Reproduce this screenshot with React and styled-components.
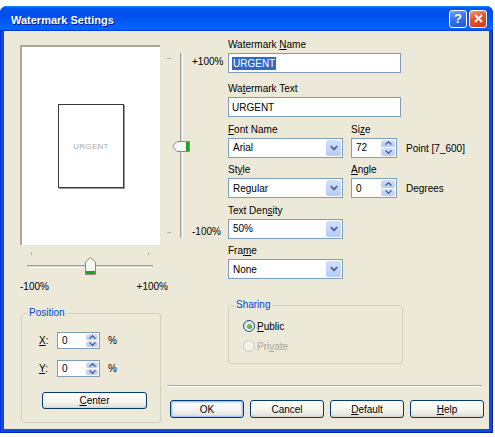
import React from "react";
import styled, { createGlobalStyle, css } from "styled-components";

const GlobalStyle = createGlobalStyle`
  html, body {
    margin: 0;
    background: #fff;
  }
  body {
    font-family: "Liberation Sans", Arial, sans-serif;
    font-size: 10px;
    color: #000;
  }
  * {
    box-sizing: border-box;
  }
`;

const Window = styled.div`
  margin-top: 6px;
  width: 493px;
  height: 427px;
  display: flex;
  flex-direction: column;
  background: #0b4be0;
  border-radius: 7px 7px 0 0;
  box-shadow: inset 1px 0 #0831d9, inset -1px 0 #0026b0, inset 0 -1px #0026b0;
`;

const TitleBar = styled.div`
  height: 25px;
  flex-shrink: 0;
  display: flex;
  align-items: center;
  justify-content: space-between;
  padding: 0 6px 0 11px;
  border-radius: 7px 7px 0 0;
  background: linear-gradient(
    180deg,
    #0997ff,
    #0053ee 8%,
    #0050ee 40%,
    #06f 88%,
    #06f 93%,
    #005bff 95%,
    #003dd7 96%,
    #003dd7
  );
`;

const TitleText = styled.div`
  padding-top: 2px;
  color: #fff;
  font-weight: bold;
  font-size: 11px;
  text-shadow: 1px 1px #0f1089;
`;

const TitleButtons = styled.div`
  display: flex;
  gap: 2px;
`;

const TitleButton = styled.div`
  width: 18px;
  height: 18px;
  border: 1px solid #fff;
  border-radius: 3px;
  display: flex;
  align-items: center;
  justify-content: center;
  color: #fff;
  font-weight: bold;
  font-size: 13px;
  ${({ close }) =>
    close
      ? css`
          background: linear-gradient(160deg, #f0a080, #e0552a 45%, #c83c14);
        `
      : css`
          background: linear-gradient(160deg, #7aa6ff, #3a73ea 45%, #1e55d2);
        `}
`;

const Client = styled.div`
  flex: 1;
  min-height: 0;
  margin: 0 4px 4px;
  background: #ece9d8;
  display: flex;
  padding: 8px 5px 11px 16px;
`;

const LeftCol = styled.div`
  width: 141px;
  flex-shrink: 0;
  margin-bottom: -5px;
  display: flex;
  flex-direction: column;
`;

const PreviewBox = styled.div`
  margin-top: 6px;
  width: 140px;
  height: 200px;
  background: #fff;
  border-top: 2px solid #aca899;
  border-left: 2px solid #aca899;
  display: flex;
  align-items: center;
  justify-content: center;
`;

const PreviewPage = styled.div`
  width: 66px;
  height: 84px;
  border: 1px solid #3a3a3a;
  box-shadow: 1px 1px 0 #9a9a9a;
  display: flex;
  align-items: center;
  justify-content: center;
  font-size: 8px;
  letter-spacing: 0.3px;
  color: #a9a9a9;
`;

const HSlider = styled.div`
  position: relative;
  margin: 3px 0 0 7px;
  width: 126px;
  height: 28px;
`;

const TickRow = styled.div`
  display: flex;
  justify-content: space-between;
  padding: 4px 4px 0;
`;

const HTick = styled.div`
  width: 1px;
  height: 3px;
  background: #b4b1a2;
`;

const HTrack = styled.div`
  margin-top: 10px;
  height: 3px;
  border-top: 1px solid #a3a196;
  border-bottom: 1px solid #fff;
  background: #d8d5c8;
`;

const HThumb = styled.svg`
  position: absolute;
  left: 58px;
  top: 9px;
`;

const HLabels = styled.div`
  width: 148px;
  display: flex;
  justify-content: space-between;
  margin-top: 5px;
  line-height: 12px;
`;

const GroupBox = styled.fieldset`
  margin: 0;
  border: 1px solid #d0d0bf;
  border-radius: 3px;
  min-width: 0;
`;

const GroupLegend = styled.legend`
  padding: 0 2px;
  color: #0046d5;
  line-height: 12px;
`;

const PositionGroup = styled(GroupBox)`
  margin: 14px 0 0 1px;
  width: 140px;
  padding: 13px 5px 13px;
`;

const SpinRow = styled.div`
  display: flex;
  align-items: center;
  height: 17px;
  margin-left: 12px;
  & + & {
    margin-top: 11px;
  }
`;

const SpinLabel = styled.span`
  width: 18px;
`;

const SpinBox = styled.div`
  width: ${({ w }) => w}px;
  height: ${({ h }) => h}px;
  border: 1px solid #7f9db9;
  background: #fff;
  display: flex;
  align-items: center;
`;

const BoxValue = styled.span`
  flex: 1;
  padding-left: 4px;
`;

const Spinner = styled.div`
  width: ${({ w }) => w}px;
  align-self: stretch;
  margin: 1px;
  display: flex;
  flex-direction: column;
  gap: 1px;
`;

const SpinHalf = styled.div`
  flex: 1;
  border-radius: 2px;
  background: linear-gradient(180deg, #d3e0fd, #b7cbf8);
  display: flex;
  align-items: center;
  justify-content: center;
`;

const UnitText = styled.span`
  margin-left: ${({ gap }) => gap}px;
  white-space: nowrap;
`;

const SideUnit = styled(UnitText)`
  margin-bottom: 4px;
`;

const XpButton = styled.button`
  font: inherit;
  font-size: 10px;
  color: #000;
  width: ${({ w }) => w}px;
  height: ${({ h }) => h}px;
  padding: 0;
  border: 1px solid #003c74;
  border-radius: 3px;
  background: linear-gradient(180deg, #fff 0%, #f5f5f1 55%, #e6e5dd 88%, #d6d0c5 100%);
  ${({ primary }) =>
    primary &&
    css`
      box-shadow: inset 0 0 0 1px #a8c4f0, inset 0 0 0 2px #cfdcf5;
    `}
`;

const CenterButton = styled(XpButton)`
  display: block;
  margin: 15px 0 0 15px;
`;

const RightCol = styled.div`
  flex: 1;
  margin-left: 6px;
  display: flex;
  flex-direction: column;
`;

const Upper = styled.div`
  display: flex;
  align-items: flex-start;
`;

const VSlider = styled.div`
  margin-top: 14px;
  width: 61px;
  height: 185px;
  display: flex;
  flex-shrink: 0;
`;

const VTickCol = styled.div`
  width: 7px;
  display: flex;
  flex-direction: column;
  justify-content: space-between;
  padding: 5px 0;
`;

const VTick = styled.div`
  width: 4px;
  height: 1px;
  background: #b4b1a2;
`;

const VTrackCol = styled.div`
  position: relative;
  width: 14px;
  display: flex;
  justify-content: center;
`;

const VTrack = styled.div`
  width: 3px;
  height: 100%;
  border-left: 1px solid #a3a196;
  border-right: 1px solid #fff;
  background: #d8d5c8;
`;

const VThumb = styled.svg`
  position: absolute;
  left: -2px;
  top: 88px;
`;

const VLabels = styled.div`
  flex: 1;
  display: flex;
  flex-direction: column;
  justify-content: space-between;
  padding: 3px 0 0 4px;
  line-height: 12px;
`;

const FormCol = styled.div`
  width: 175px;
  flex-shrink: 0;
  display: flex;
  flex-direction: column;
  gap: 6.5px;
`;

const Field = styled.div`
  display: flex;
  flex-direction: column;
  margin-bottom: ${({ extra }) => extra || 0}px;
`;

const FieldRow = styled.div`
  display: flex;
  align-items: flex-end;
  white-space: nowrap;
`;

const SideField = styled(Field)`
  margin-left: 8px;
`;

const FieldLabel = styled.label`
  line-height: 12px;
  margin-bottom: 2px;
`;

const TextBox = styled.div`
  width: 173px;
  height: 20px;
  border: 1px solid #7f9db9;
  background: #fff;
  display: flex;
  align-items: center;
  padding-left: 3px;
`;

const Selected = styled.span`
  background: #316ac5;
  color: #fff;
  padding: 1px 1px;
`;

const SelectBox = styled.div`
  width: 115px;
  height: 20px;
  border: 1px solid #7f9db9;
  background: #fff;
  display: flex;
  align-items: center;
`;

const DropButton = styled.div`
  width: 15px;
  align-self: stretch;
  margin: 1px;
  border-radius: 2px;
  background: linear-gradient(180deg, #d3e0fd, #b7cbf8);
  display: flex;
  align-items: center;
  justify-content: center;
`;

const SharingGroup = styled(GroupBox)`
  margin-top: 13.5px;
  width: 175px;
  padding: 9px 5px 11px;
`;

const RadioRow = styled.div`
  display: flex;
  align-items: center;
  gap: 2px;
  height: 12px;
  margin-left: 9px;
  color: ${({ disabled }) => (disabled ? "#aca899" : "#000")};
  & + & {
    margin-top: 8px;
  }
`;

const RadioDot = styled.span`
  width: 12px;
  height: 12px;
  border-radius: 50%;
  display: flex;
  align-items: center;
  justify-content: center;
  border: 1px solid ${({ disabled }) => (disabled ? "#cac8bb" : "#1c5180")};
  background: ${({ disabled }) =>
    disabled ? "#f2f1ea" : "linear-gradient(135deg, #dcdcd4, #fff)"};
  &::after {
    content: "";
    width: 5px;
    height: 5px;
    border-radius: 50%;
    background: ${({ checked }) =>
      checked ? "radial-gradient(circle at 35% 35%, #6ad46a, #21a121)" : "transparent"};
  }
`;

const Separator = styled.div`
  margin-top: auto;
  width: 315px;
  height: 2px;
  border-top: 1px solid #aca899;
  border-bottom: 1px solid #fff;
`;

const ButtonRow = styled.div`
  display: flex;
  gap: 6px;
  margin-top: 13px;
  padding-left: 3px;
`;

const Chevron = ({ up }) => (
  <svg width="7" height="4" viewBox="0 0 7 4">
    <path
      d={up ? "M0.5 3.5 L3.5 0.8 L6.5 3.5" : "M0.5 0.5 L3.5 3.2 L6.5 0.5"}
      fill="none"
      stroke="#4d6185"
      strokeWidth="1.4"
    />
  </svg>
);

const DropChevron = () => (
  <svg width="8" height="6" viewBox="0 0 8 6">
    <path d="M0.8 1 L4 4.4 L7.2 1" fill="none" stroke="#4d6185" strokeWidth="1.8" />
  </svg>
);

const Spin = ({ w }) => (
  <Spinner w={w}>
    <SpinHalf>
      <Chevron up />
    </SpinHalf>
    <SpinHalf>
      <Chevron />
    </SpinHalf>
  </Spinner>
);

const Select = ({ value }) => (
  <SelectBox>
    <BoxValue>{value}</BoxValue>
    <DropButton>
      <DropChevron />
    </DropButton>
  </SelectBox>
);

const App = () => {
  return (
    <>
      <GlobalStyle />
      <Window>
        <TitleBar>
          <TitleText>Watermark Settings</TitleText>
          <TitleButtons>
            <TitleButton>?</TitleButton>
            <TitleButton close>
              <svg width="9" height="9" viewBox="0 0 9 9">
                <path d="M1 1 L8 8 M8 1 L1 8" stroke="#fff" strokeWidth="2" />
              </svg>
            </TitleButton>
          </TitleButtons>
        </TitleBar>
        <Client>
          <LeftCol>
            <PreviewBox>
              <PreviewPage>URGENT</PreviewPage>
            </PreviewBox>
            <HSlider>
              <TickRow>
                <HTick />
                <HTick />
              </TickRow>
              <HTrack />
              <HThumb width="11" height="18" viewBox="0 0 11 18">
                <path d="M5.5 0.5 L10.5 5 V17.5 H0.5 V5 Z" fill="#f7f7f4" stroke="#8a8a80" />
                <rect x="1" y="14" width="9" height="3" fill="#21a121" />
              </HThumb>
            </HSlider>
            <HLabels>
              <span>-100%</span>
              <span>+100%</span>
            </HLabels>
            <PositionGroup>
              <GroupLegend>Position</GroupLegend>
              <SpinRow>
                <SpinLabel>
                  <u>X</u>:
                </SpinLabel>
                <SpinBox w={43} h={17}>
                  <BoxValue>0</BoxValue>
                  <Spin w={12} />
                </SpinBox>
                <UnitText gap={8}>%</UnitText>
              </SpinRow>
              <SpinRow>
                <SpinLabel>
                  <u>Y</u>:
                </SpinLabel>
                <SpinBox w={43} h={17}>
                  <BoxValue>0</BoxValue>
                  <Spin w={12} />
                </SpinBox>
                <UnitText gap={8}>%</UnitText>
              </SpinRow>
              <CenterButton w={105} h={17}>
                <u>C</u>enter
              </CenterButton>
            </PositionGroup>
          </LeftCol>
          <RightCol>
            <Upper>
              <VSlider>
                <VTickCol>
                  <VTick />
                  <VTick />
                </VTickCol>
                <VTrackCol>
                  <VTrack />
                  <VThumb width="18" height="11" viewBox="0 0 18 11">
                    <path d="M0.5 5.5 L5 0.5 H17.5 V10.5 H5 Z" fill="#f7f7f4" stroke="#8a8a80" />
                    <rect x="14" y="1" width="3" height="9" fill="#21a121" />
                  </VThumb>
                </VTrackCol>
                <VLabels>
                  <span>+100%</span>
                  <span>-100%</span>
                </VLabels>
              </VSlider>
              <FormCol>
                <Field extra={3.5}>
                  <FieldLabel>
                    Watermark <u>N</u>ame
                  </FieldLabel>
                  <TextBox>
                    <Selected>URGENT</Selected>
                  </TextBox>
                </Field>
                <Field>
                  <FieldLabel>
                    Wa<u>t</u>ermark Text
                  </FieldLabel>
                  <TextBox>URGENT</TextBox>
                </Field>
                <FieldRow>
                  <Field>
                    <FieldLabel>
                      <u>F</u>ont Name
                    </FieldLabel>
                    <Select value="Arial" />
                  </Field>
                  <SideField>
                    <FieldLabel>
                      Si<u>z</u>e
                    </FieldLabel>
                    <SpinBox w={46} h={20}>
                      <BoxValue>72</BoxValue>
                      <Spin w={14} />
                    </SpinBox>
                  </SideField>
                  <SideUnit gap={9}>Point [7_600]</SideUnit>
                </FieldRow>
                <FieldRow>
                  <Field>
                    <FieldLabel>
                      St<u>y</u>le
                    </FieldLabel>
                    <Select value="Regular" />
                  </Field>
                  <SideField>
                    <FieldLabel>
                      <u>A</u>ngle
                    </FieldLabel>
                    <SpinBox w={46} h={20}>
                      <BoxValue>0</BoxValue>
                      <Spin w={14} />
                    </SpinBox>
                  </SideField>
                  <SideUnit gap={9}>Degrees</SideUnit>
                </FieldRow>
                <Field>
                  <FieldLabel>
                    Text Den<u>s</u>ity
                  </FieldLabel>
                  <Select value="50%" />
                </Field>
                <Field>
                  <FieldLabel>
                    Fra<u>m</u>e
                  </FieldLabel>
                  <Select value="None" />
                </Field>
                <SharingGroup>
                  <GroupLegend>Sharing</GroupLegend>
                  <RadioRow>
                    <RadioDot checked />
                    <span>
                      <u>P</u>ublic
                    </span>
                  </RadioRow>
                  <RadioRow disabled>
                    <RadioDot disabled />
                    <span>
                      Pri<u>v</u>ate
                    </span>
                  </RadioRow>
                </SharingGroup>
              </FormCol>
            </Upper>
            <Separator />
            <ButtonRow>
              <XpButton w={74} h={18} primary>
                OK
              </XpButton>
              <XpButton w={74} h={18}>
                Cancel
              </XpButton>
              <XpButton w={74} h={18}>
                <u>D</u>efault
              </XpButton>
              <XpButton w={74} h={18}>
                <u>H</u>elp
              </XpButton>
            </ButtonRow>
          </RightCol>
        </Client>
      </Window>
    </>
  );
};

export default App;
